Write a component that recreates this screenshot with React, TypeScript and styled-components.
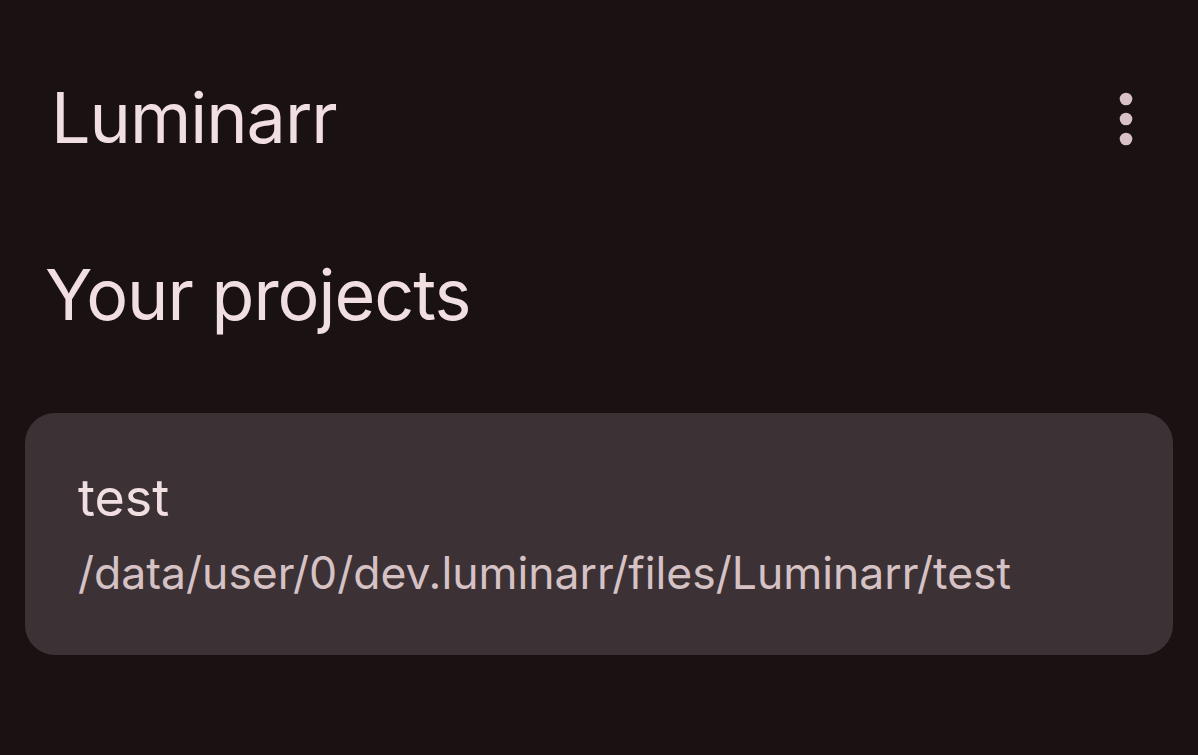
import React from "react";
import styled, { createGlobalStyle } from "styled-components";

const Global = createGlobalStyle`
  html, body { margin: 0; padding: 0; background: #1a1113; }
  body { font-family: Inter, "Open Sans", sans-serif; color: #f0dee1; }
  #root { height: 755px; overflow: hidden; }
`;

const Screen = styled.div`
  width: 1198px;
  height: 755px;
  background: #1a1113;
  display: flex;
  flex-direction: column;
`;

const TopBar = styled.header`
  height: 168px;
  box-sizing: border-box;
  display: flex;
  align-items: flex-start;
  justify-content: space-between;
  padding: 68px 52px 0 51px;
`;

const AppTitle = styled.h1`
  margin: 0;
  font-weight: 400;
  font-size: 70px;
  line-height: 100px;
  letter-spacing: -1px;
  color: #f0dee1;
`;

const MenuButton = styled.button`
  background: none;
  border: none;
  padding: 0;
  width: 40px;
  height: 102px;
  display: flex;
  align-items: center;
  justify-content: center;
  cursor: pointer;
`;

const SectionTitle = styled.h2`
  margin: 77px 0 0;
  padding-left: 45px;
  font-weight: 400;
  font-size: 70px;
  line-height: 100px;
  letter-spacing: -1px;
  color: #f0dee1;
`;

const ProjectList = styled.div`
  padding: 0 25px;
  margin-top: 68px;
`;

const Card = styled.div`
  background: #3c3235;
  border-radius: 30px;
  height: 242px;
  padding: 55px 53px 0;
  box-sizing: border-box;
  display: flex;
  flex-direction: column;
`;

const CardTitle = styled.div`
  font-size: 52px;
  line-height: 60px;
  color: #f0dee1;
`;

const CardPath = styled.div`
  margin-top: 15px;
  font-size: 44.5px;
  line-height: 60px;
  color: #d6c2c5;
`;

export default function App() {
  return (
    <Screen>
      <Global />
      <TopBar>
        <AppTitle>Luminarr</AppTitle>
        <MenuButton aria-label="More options">
          <svg width="14" height="54" viewBox="0 0 14 54">
            <circle cx="7" cy="7" r="6.3" fill="#d8c2c6" />
            <circle cx="7" cy="27" r="6.3" fill="#d8c2c6" />
            <circle cx="7" cy="47" r="6.3" fill="#d8c2c6" />
          </svg>
        </MenuButton>
      </TopBar>
      <SectionTitle>Your projects</SectionTitle>
      <ProjectList>
        <Card>
          <CardTitle>test</CardTitle>
          <CardPath>/data/user/0/dev.luminarr/files/Luminarr/test</CardPath>
        </Card>
      </ProjectList>
    </Screen>
  );
}
